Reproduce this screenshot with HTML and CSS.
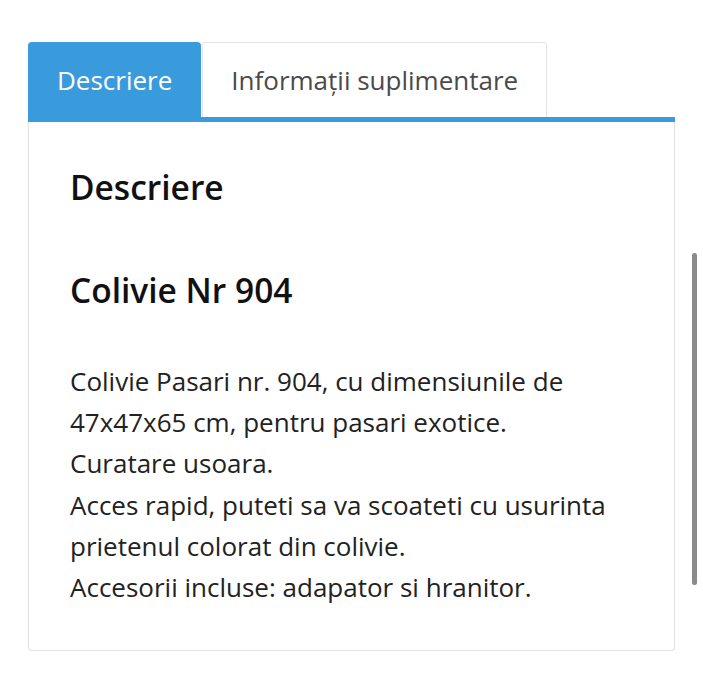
FILE: index.html
```html
<!DOCTYPE html>
<html lang="ro">
<head>
    <meta charset="UTF-8">
    <meta name="viewport" content="width=device-width, initial-scale=1.0">
    <title>Colivie Nr 904</title>
    <link rel="stylesheet" href="styles.css">
</head>
<body>
    <div class="product-tabs">
        <ul class="tabs">
            <li class="tab active">Descriere</li>
            <li class="tab">Informații suplimentare</li>
        </ul>
        <div class="panel">
            <h2>Descriere</h2>
            <h3>Colivie Nr 904</h3>
            <p>Colivie Pasari nr. 904, cu dimensiunile de 47x47x65 cm, pentru pasari exotice.<br>
            Curatare usoara.<br>
            Acces rapid, puteti sa va scoateti cu usurinta prietenul colorat din colivie.<br>
            Accesorii incluse: adapator si hranitor.</p>
        </div>
    </div>
    <div class="scroll-thumb"></div>
</body>
</html>
```

FILE: styles.css
```css
body, html {
    margin: 0;
    background: #fff;
    font-family: 'Open Sans', 'Noto Sans', sans-serif;
}
body {
    padding: 42px 28px 0 28px;
    height: 700px;
    box-sizing: border-box;
    overflow: hidden;
}
.product-tabs {
    width: 647px;
}
.tabs {
    display: flex;
    list-style: none;
    margin: 0;
    padding: 0;
    border-bottom: 5px solid #3a9bdc;
}
.tab {
    height: 75px;
    box-sizing: border-box;
    padding: 0 28px;
    display: flex;
    align-items: center;
    font-size: 26px;
    color: #4a4a4a;
    background: #fff;
    border: 1px solid #e4e4e4;
    border-bottom: none;
    border-radius: 4px 4px 0 0;
    margin-right: 1px;
}
.tab.active {
    background: #3a9bdc;
    border-color: #3a9bdc;
    color: #fff;
}
.panel {
    border: 1px solid #e2e2e2;
    border-top: none;
    border-radius: 0 0 4px 4px;
    padding: 42px 41px 42px 41px;
    color: #222;
}
.panel h2 {
    margin: 0;
    font-size: 33.5px;
    font-weight: 600;
    line-height: 46px;
    color: #111;
}
.panel h3 {
    margin: 57px 0 0 0;
    font-size: 33.5px;
    font-weight: 600;
    line-height: 46px;
    color: #111;
}
.panel p {
    margin: 48px 0 0 0;
    font-size: 26px;
    line-height: 41.2px;
}
.scroll-thumb {
    position: absolute;
    left: 692px;
    top: 253px;
    width: 5px;
    height: 332px;
    border-radius: 3px;
    background: #8a8a8a;
}
```
